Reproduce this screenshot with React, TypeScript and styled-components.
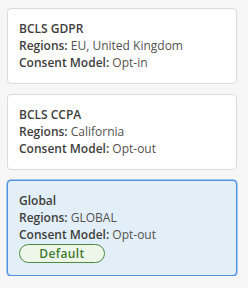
import styled, { createGlobalStyle } from 'styled-components';

interface Policy {
  name: string;
  regions: string;
  consent: string;
  isDefault?: boolean;
}

const policies: Policy[] = [
  { name: 'BCLS GDPR', regions: 'EU, United Kingdom', consent: 'Opt-in' },
  { name: 'BCLS CCPA', regions: 'California', consent: 'Opt-out' },
  { name: 'Global', regions: 'GLOBAL', consent: 'Opt-out', isDefault: true },
];

const App = () => {
  return (
    <>
      <GlobalStyle />
      <List>
        {policies.map((p) => (
          <Card key={p.name} $selected={!!p.isDefault}>
            <Title>{p.name}</Title>
            <Line>
              <Label>Regions:</Label> {p.regions}
            </Line>
            <Line>
              <Label>Consent Model:</Label> {p.consent}
            </Line>
            {p.isDefault && <Badge>Default</Badge>}
          </Card>
        ))}
      </List>
    </>
  );
};

export default App;

const GlobalStyle = createGlobalStyle`
  html, body {
    margin: 0;
    background: #f6f6f6;
  }
  body {
    font-family: 'Open Sans', 'Lato', sans-serif;
  }
`;

const List = styled.div`
  display: flex;
  flex-direction: column;
  gap: 10px;
  padding: 8px 11px 0 7px;
`;

const Card = styled.div<{ $selected: boolean }>`
  display: flex;
  flex-direction: column;
  align-items: flex-start;
  padding: 11px 11px 12px 11px;
  border-radius: 4px;
  border: 1px solid ${({ $selected }) => ($selected ? '#4f93e0' : '#dddbda')};
  background: ${({ $selected }) => ($selected ? '#e2eef8' : '#ffffff')};
  box-shadow: ${({ $selected }) => ($selected ? '0 0 0 0.5px #4f93e0' : 'none')};
`;

const Title = styled.div`
  font-size: 12px;
  line-height: 17px;
  font-weight: 600;
  color: #3e3e3c;
`;

const Line = styled.div`
  font-size: 12px;
  line-height: 17px;
  color: #54524f;
`;

const Label = styled.span`
  font-weight: 600;
  color: #3e3e3c;
`;

const Badge = styled.span`
  margin-top: 1px;
  width: 86px;
  height: 19px;
  box-sizing: border-box;
  display: flex;
  align-items: center;
  justify-content: center;
  border: 1px solid #4b8a3e;
  border-radius: 10px;
  background: #eef6ea;
  color: #3d7a2f;
  font-size: 12px;
  font-weight: 600;
  letter-spacing: 0.4px;
`;
